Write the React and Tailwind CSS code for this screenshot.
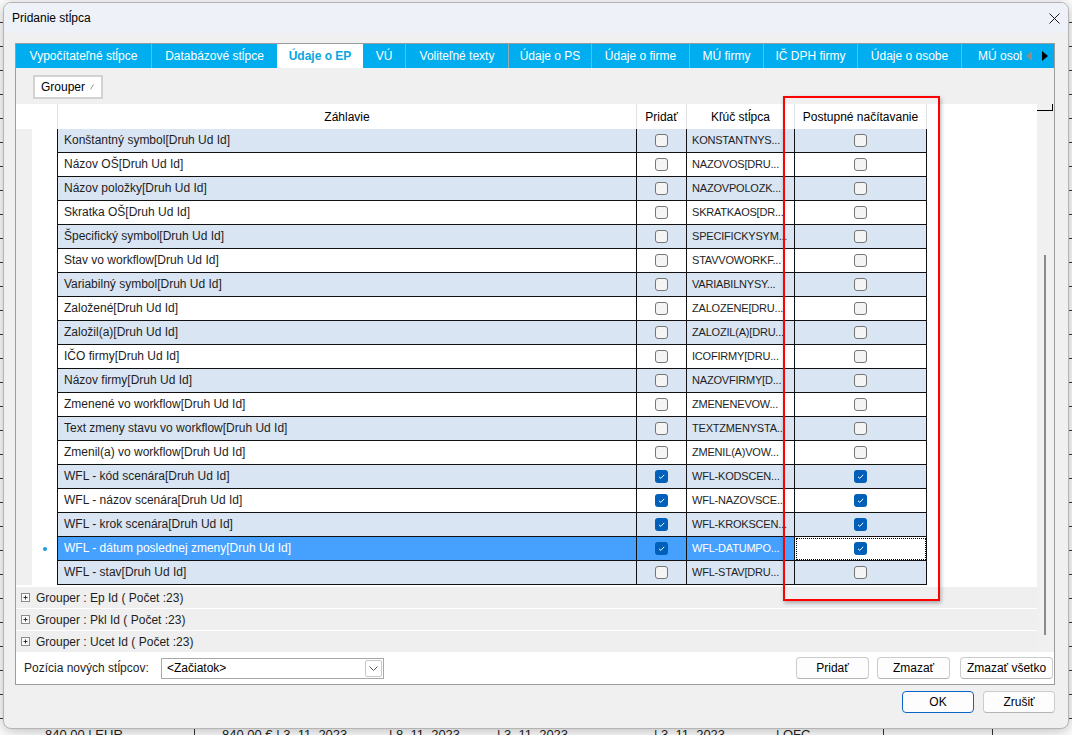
import React from 'react';

const TABS = [
  { label: 'Vypočítateľné stĺpce', w: 'w-[136px]' },
  { label: 'Databázové stĺpce', w: 'w-[125px]' },
  { label: 'Údaje o EP', w: 'w-[86px]', active: true },
  { label: 'VÚ', w: 'w-[43px]' },
  { label: 'Voliteľné texty', w: 'w-[103px]' },
  { label: 'Údaje o PS', w: 'w-[83px]' },
  { label: 'Údaje o firme', w: 'w-[98px]' },
  { label: 'MÚ firmy', w: 'w-[74px]' },
  { label: 'IČ DPH firmy', w: 'w-[94px]' },
  { label: 'Údaje o osobe', w: 'w-[104px]' },
];

const ROWS = [
  ['Konštantný symbol[Druh Ud Id]', 'KONSTANTNYS...'],
  ['Názov OŠ[Druh Ud Id]', 'NAZOVOS[DRU...'],
  ['Názov položky[Druh Ud Id]', 'NAZOVPOLOZK...'],
  ['Skratka OŠ[Druh Ud Id]', 'SKRATKAOS[DR...'],
  ['Špecifický symbol[Druh Ud Id]', 'SPECIFICKYSYM...'],
  ['Stav vo workflow[Druh Ud Id]', 'STAVVOWORKF...'],
  ['Variabilný symbol[Druh Ud Id]', 'VARIABILNYSY...'],
  ['Založené[Druh Ud Id]', 'ZALOZENE[DRU...'],
  ['Založil(a)[Druh Ud Id]', 'ZALOZIL(A)[DRU...'],
  ['IČO firmy[Druh Ud Id]', 'ICOFIRMY[DRU...'],
  ['Názov firmy[Druh Ud Id]', 'NAZOVFIRMY[D...'],
  ['Zmenené vo workflow[Druh Ud Id]', 'ZMENENEVOW...'],
  ['Text zmeny stavu vo workflow[Druh Ud Id]', 'TEXTZMENYSTA...'],
  ['Zmenil(a) vo workflow[Druh Ud Id]', 'ZMENIL(A)VOW...'],
  ['WFL - kód scenára[Druh Ud Id]', 'WFL-KODSCEN...', true],
  ['WFL - názov scenára[Druh Ud Id]', 'WFL-NAZOVSCE...', true],
  ['WFL - krok scenára[Druh Ud Id]', 'WFL-KROKSCEN...', true],
  ['WFL - dátum poslednej zmeny[Druh Ud Id]', 'WFL-DATUMPO...', true, true],
  ['WFL - stav[Druh Ud Id]', 'WFL-STAV[DRU...'],
];

const GROUPS = ['Grouper : Ep Id ( Počet :23)', 'Grouper : Pkl Id ( Počet :23)', 'Grouper : Ucet Id ( Počet :23)'];

function Check({ on }) {
  if (on) {
    return (
      <span className="flex h-[13px] w-[13px] items-center justify-center rounded-[3px] bg-[#005fb8]">
        <svg width="9" height="9" viewBox="0 0 9 9">
          <path d="M2 4.8 L3.8 6.4 L7.2 2.8" fill="none" stroke="#ffffff" strokeWidth="1" />
        </svg>
      </span>
    );
  }
  return <span className="block h-[13px] w-[13px] rounded-[3px] border border-[#767676] bg-[#f4f4f4]" />;
}

// the application window that lies behind the dialog
function Backdrop() {
  return (
    <div className="flex h-full w-full flex-col bg-white">
      <div className="h-[23px] shrink-0 border-b border-[#3c3c3c]" />
      {Array.from({ length: 29 }).map((_, i) => (
        <div key={i} className="h-[24px] shrink-0 border-b border-[#3c3c3c]" />
      ))}
      <div className="flex h-[24px] shrink-0 items-start whitespace-nowrap pt-[8px] text-[13px] leading-[15px] text-[#222]">
        <span className="w-[45px]" />
        <span className="w-[149px]">840,00 | EUR</span>
        <span className="h-full w-[195px] border-l border-[#333] pl-[27px]">840,00 € | 3. 11. 2023</span>
        <span className="w-[108px]">| 8. 11. 2023</span>
        <span className="w-[157px]">| 3. 11. 2023</span>
        <span className="w-[122px]">| 3. 11. 2023</span>
        <span className="w-[107px]">| OFC</span>
        <span className="h-full w-[109px] border-l border-[#333]" />
        <span className="h-full flex-1 border-l border-[#333]" />
      </div>
    </div>
  );
}

function TabStrip() {
  return (
    <div className="flex h-[24px] shrink-0 bg-[#00aeef] text-[12px] text-white">
      {TABS.map((t, i) => {
        const next = TABS[i + 1];
        const sep = !t.active && !(next && next.active);
        return (
          <div
            key={t.label}
            className={`flex shrink-0 items-center justify-center whitespace-nowrap ${t.w} ${
              t.active ? 'bg-white font-bold text-[#0aa6e0]' : ''
            } ${sep ? 'border-r border-[#98a9b2]' : ''}`}
          >
            {t.label}
          </div>
        );
      })}
      <div className="flex w-[60px] shrink-0 items-center overflow-hidden whitespace-nowrap pl-[16px]">MÚ osobe</div>
      <div className="flex flex-1 items-center gap-[10px] pl-[4px]">
        <svg width="6" height="10" viewBox="0 0 6 10">
          <path d="M6 0 L0 5 L6 10 Z" fill="#8c8c8c" />
        </svg>
        <svg width="6" height="10" viewBox="0 0 6 10">
          <path d="M0 0 L6 5 L0 10 Z" fill="#000000" />
        </svg>
      </div>
    </div>
  );
}

function Grid() {
  return (
    <div className="flex h-[483px] flex-col bg-white">
      <div className="flex h-[25px] shrink-0 text-black">
        <div className="w-[41px]" />
        <div className="flex w-[580px] items-center justify-center border-x border-[#e2e2e2]">Záhlavie</div>
        <div className="flex w-[50px] items-center justify-center border-r border-[#e2e2e2]">Pridať</div>
        <div className="flex w-[108px] items-center justify-center border-r border-[#e2e2e2]">Kľúč stĺpca</div>
        <div className="flex w-[132px] items-center justify-center border-r border-[#e2e2e2]">Postupné načítavanie</div>
      </div>
      {ROWS.map(([label, key, checked, selected], i) => {
        const bg = selected ? 'bg-[#45a1fd]' : i % 2 === 0 ? 'bg-[#d9e5f2]' : 'bg-white';
        const txt = selected ? 'text-white' : 'text-[#1e1e1e]';
        return (
          <div key={label} className="flex h-[24px] shrink-0">
            <div className="w-[16px] bg-[#f0f0f0]" />
            <div className="flex w-[25px] items-center justify-center">
              {selected && <span className="h-[4px] w-[4px] rounded-full bg-[#1a9be0]" />}
            </div>
            <div className={`flex w-[580px] items-center border-x border-b border-[#111] pb-[1px] pl-[6px] ${bg} ${txt}`}>{label}</div>
            <div className={`flex w-[50px] items-center justify-center border-r border-b border-[#111] ${bg}`}>
              <Check on={checked} />
            </div>
            <div
              className={`flex w-[108px] items-center overflow-hidden whitespace-nowrap border-r border-b border-[#111] pb-[1px] pl-[5px] text-[11px] tracking-[-0.2px] ${bg} ${txt}`}
            >
              {key}
            </div>
            <div
              className={`flex w-[132px] items-center justify-center border-r border-b border-[#111] ${
                selected ? 'bg-white outline-1 -outline-offset-2 outline-dotted outline-black' : bg
              }`}
            >
              <Check on={checked} />
            </div>
          </div>
        );
      })}
    </div>
  );
}

function Groups() {
  return (
    <div className="flex flex-col gap-[1px] bg-white">
      {GROUPS.map((g) => (
        <div key={g} className="flex h-[21px] items-center gap-[6px] bg-[#efefef] pl-[5px] text-[#1e1e1e]">
          <svg width="9" height="9" viewBox="0 0 9 9">
            <rect x="0.5" y="0.5" width="8" height="8" fill="#fafafa" stroke="#8a8a8a" />
            <path d="M2.5 4.5 H6.5 M4.5 2.5 V6.5" stroke="#333" strokeWidth="1" />
          </svg>
          <span>{g}</span>
        </div>
      ))}
    </div>
  );
}

function Btn({ children, w, primary }) {
  return (
    <button
      className={`flex h-[22px] items-center justify-center rounded-[4px] border bg-[#fdfdfd] text-[12px] text-black ${w} ${
        primary ? 'border-[#0a64c8]' : 'border-[#cccccc] border-b-[#b5b5b5]'
      }`}
    >
      {children}
    </button>
  );
}

function Panel() {
  return (
    <div className="flex h-[642px] shrink-0 flex-col border border-[#9c9c9c] bg-[#f0f0f0]">
      <TabStrip />
      <div className="h-[36px] shrink-0 pl-[17px] pt-[7px]">
        <div className="flex h-[24px] w-[70px] items-center border-2 border-[#d2d2d2] bg-white pl-[6px] text-black">
          Grouper
          <svg className="ml-[5px]" width="4" height="6" viewBox="0 0 4 6">
            <path d="M0.5 5.5 L3.5 0.5" stroke="#9a9a9a" strokeWidth="1" />
          </svg>
        </div>
      </div>
      <div className="flex h-[548px] shrink-0">
        <div className="flex w-[1021px] flex-col">
          <Grid />
          <Groups />
        </div>
        <div className="flex flex-1 flex-col bg-[#f0f0f0]">
          <div className="h-[7px] w-[16px] border-b border-r border-black" />
          <div className="ml-[7px] mt-[144px] h-[380px] w-[2px] bg-[#8a8a8a]" />
        </div>
      </div>
      <div className="flex h-[32px] shrink-0 items-center bg-white pl-[8px] text-[#1e1e1e]">
        <span className="w-[137px]">Pozícia nových stĺpcov:</span>
        <div className="flex h-[21px] w-[223px] items-center justify-between border border-[#a8a8a8] bg-white pl-[5px] pr-[1px] text-black">
          <span>&lt;Začiatok&gt;</span>
          <span className="flex h-[17px] w-[17px] items-center justify-center rounded-[2px] border border-[#c8c8c8] bg-white">
            <svg width="9" height="5" viewBox="0 0 9 5">
              <path d="M0.5 0.5 L4.5 4.5 L8.5 0.5" fill="none" stroke="#555" strokeWidth="1" />
            </svg>
          </span>
        </div>
        <div className="ml-auto mr-[1px] flex gap-[8px]">
          <Btn w="w-[73px]">Pridať</Btn>
          <Btn w="w-[73px]">Zmazať</Btn>
          <span className="w-[1px]" />
        </div>
        <div className="mr-[1px]">
          <Btn w="w-[93px]">Zmazať všetko</Btn>
        </div>
      </div>
    </div>
  );
}

export default function App() {
  return (
    <div className="relative h-[735px] w-[1072px] overflow-hidden bg-white font-['Liberation_Sans',Arial,sans-serif] text-[12px] text-[#1b1b1b]">
      <Backdrop />

      {/* dialog window */}
      <div className="absolute left-[3px] top-[2px] flex h-[727px] w-[1066px] flex-col overflow-hidden rounded-[8px] border border-[#b4b4b4] bg-[#f0f0f0] shadow-[0_2px_14px_rgba(0,0,0,0.28)]">
        <div className="flex h-[30px] shrink-0 items-center justify-between bg-[#eef2f8] pl-[8px] pr-[8px]">
          <span className="text-black">Pridanie stĺpca</span>
          <svg width="11" height="11" viewBox="0 0 11 11">
            <path d="M0.5 0.5 L10.5 10.5 M10.5 0.5 L0.5 10.5" stroke="#1a1a1a" strokeWidth="1" />
          </svg>
        </div>
        <div className="flex flex-1 flex-col pl-[11px] pr-[13px] pt-[10px]">
          <Panel />
          <div className="mt-[6px] flex justify-end gap-[9px]">
            <Btn w="w-[72px]" primary>OK</Btn>
            <Btn w="w-[72px]">Zrušiť</Btn>
          </div>
        </div>
      </div>

      {/* red highlight */}
      <div className="pointer-events-none absolute left-[783px] top-[96px] h-[505px] w-[157px] border-2 border-[#ff0000] shadow-[1px_2px_4px_rgba(0,0,0,0.3)]" />
    </div>
  );
}
